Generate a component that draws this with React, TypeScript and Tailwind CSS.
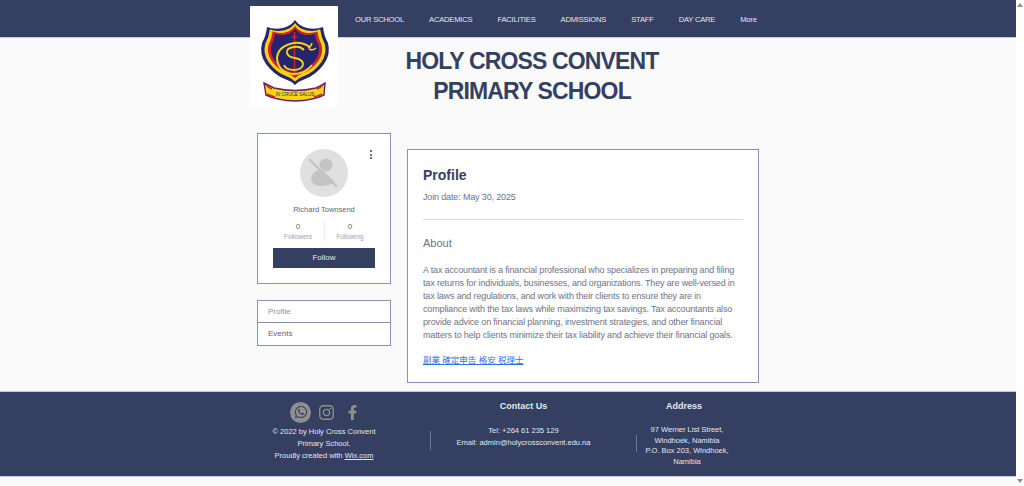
import { FaWhatsapp, FaInstagram, FaFacebookF } from "react-icons/fa";

const NAV = ["OUR SCHOOL", "ACADEMICS", "FACILITIES", "ADMISSIONS", "STAFF", "DAY CARE", "More"];
const SHIELD = "M45 14 Q49 20 57 22 Q66 24 73 21 Q74 30 78 37 Q81 48 74 58 Q66 69 55 73 Q49 75 45 79 Q41 75 35 73 Q24 69 16 58 Q9 48 12 37 Q16 30 17 21 Q24 24 33 22 Q41 20 45 14 Z";

function Crest() {
  return (
    <svg viewBox="0 0 88 101" className="absolute left-[250px] top-[6px] h-[101px] w-[88px] bg-white">
      <path d={SHIELD} fill="#26236f" />
      <path d={SHIELD} fill="#f5d614" transform="translate(45 44) scale(.9) translate(-45 -44)" />
      <path d={SHIELD} fill="#d0222b" transform="translate(45 44) scale(.8) translate(-45 -44)" />
      <path d={SHIELD} fill="#26236f" transform="translate(45 44) scale(.71) translate(-45 -44)" />
      <path d="M44.5 26 V71 M42 31 H47 M42 66 H47" stroke="#d0222b" strokeWidth="1.5" fill="none" />
      <path d="M60 41 Q52 36 44 37 Q28 40 27 52 Q28 67 44 68 Q55 68 62 59" stroke="#f5d614" strokeWidth="2" fill="none" />
      <path d="M54 44 Q50 40 44 41 Q36 42 37 47 Q38 51 45 52 Q54 54 53 59 Q51 64 44 64 Q36 64 34 59" stroke="#f5d614" strokeWidth="2" fill="none" />
      <path d="M58 42 Q61 41 62 37 M59 43 Q63 45 66 42" stroke="#f5d614" strokeWidth="1.4" fill="none" />
      <path d="M14 77 Q20 80 24 82 Q45 87 66 82 Q70 80 75 77 L74 89 Q68 92 62 93 Q45 97 28 93 Q22 92 16 89 Z" fill="#f5d614" stroke="#6d1f63" strokeWidth="1.4" />
      <path d="M16 79 Q19 82 22 83 M73 79 Q70 82 67 83 M17 88 Q21 90 25 91 M72 88 Q68 90 64 91" stroke="#d0222b" strokeWidth="1.6" fill="none" />
      <text x="45" y="89.5" textAnchor="middle" fontSize="4.6" fill="#2f2a50" fontFamily="Liberation Sans, sans-serif">IN CRUCE SALUS</text>
    </svg>
  );
}

function Avatar() {
  return (
    <div className="flex h-[48px] w-[48px] items-center justify-center rounded-full bg-[#e0e0e0]">
      <svg viewBox="0 0 48 48" className="h-[48px] w-[48px]">
        <circle cx="26" cy="16" r="6.5" fill="#c4c4c4" />
        <path d="M11 30 Q12 21 22 21 L35 33 Q29 37 21 37 Q12 37 11 30 Z" fill="#c4c4c4" />
        <path d="M9 10 L37 38" stroke="#c4c4c4" strokeWidth="2.4" />
      </svg>
    </div>
  );
}

export default function App() {
  return (
    <div className="flex h-[486px] w-[1024px] overflow-hidden bg-white font-['Liberation_Sans',sans-serif]">
      <div className="relative flex w-[1016px] flex-col bg-[#fafafa]">
        <header className="flex h-[38px] shrink-0 items-center gap-[25px] border-b border-[#c9c9e0] bg-[#343f62] pl-[355px] pt-[2px] text-[7.6px] tracking-[-0.2px] text-[#e4e6ee]">
          {NAV.map((n) => (
            <span key={n}>{n}</span>
          ))}
        </header>
        <Crest />
        <div className="flex h-[353px] shrink-0 flex-col">
          <h1 className="ml-[282px] mt-[8px] w-[500px] text-center text-[23px] font-bold leading-[30px] tracking-[-0.85px] text-[#343f62]">
            HOLY CROSS CONVENT
            <br />
            PRIMARY SCHOOL
          </h1>
          <div className="ml-[257px] mt-[27px] flex items-start gap-[16px]">
            <div className="flex w-[134px] flex-col gap-[16px]">
              <section className="relative flex h-[151px] flex-col items-center border border-[#8a90ad] bg-white pt-[15px]">
                <div className="absolute right-[18px] top-[16px] flex flex-col gap-[1.5px]">
                  <i className="block h-[2px] w-[2px] rounded-full bg-[#343f62]" />
                  <i className="block h-[2px] w-[2px] rounded-full bg-[#343f62]" />
                  <i className="block h-[2px] w-[2px] rounded-full bg-[#343f62]" />
                </div>
                <Avatar />
                <div className="mt-[8px] text-[7.5px] leading-[10px] text-[#5f6478]">Richard Townsend</div>
                <div className="mt-[7px] flex h-[19px] w-[103px] items-stretch">
                  <div className="flex flex-1 flex-col items-center text-center">
                    <span className="text-[8px] leading-[10px] text-[#5f6478]">0</span>
                    <span className="text-[6.5px] leading-[9px] text-[#9a9fb1]">Followers</span>
                  </div>
                  <div className="w-px bg-[#ededed]" />
                  <div className="flex flex-1 flex-col items-center text-center">
                    <span className="text-[8px] leading-[10px] text-[#5f6478]">0</span>
                    <span className="text-[6.5px] leading-[9px] text-[#9a9fb1]">Following</span>
                  </div>
                </div>
                <button className="mt-[7px] flex h-[20px] w-[102px] items-center justify-center bg-[#343f62] text-[8px] text-[#e4e6ee]">
                  Follow
                </button>
              </section>
              <nav className="flex h-[46px] flex-col border border-[#8a90ad] bg-white text-[8px] text-[#5f6478]">
                <div className="flex h-[22px] items-center border-b border-[#8a90ad] pl-[10px] text-[#8d92a6]">Profile</div>
                <div className="flex flex-1 items-center pl-[10px]">Events</div>
              </nav>
            </div>
            <section className="mt-[16px] flex h-[234px] w-[352px] flex-col border border-[#8a90ad] bg-white px-[15px] pt-[16px]">
              <h2 className="text-[14px] font-bold leading-[19px] text-[#343f62]">Profile</h2>
              <p className="mt-[6px] text-[9px] leading-[12px] tracking-[-0.15px] text-[#6d7389]">Join date: May 30, 2025</p>
              <div className="mt-[16px] h-px w-full bg-[#dcdcdc]" />
              <h3 className="mt-[16px] text-[11px] leading-[14px] text-[#6d7389]">About</h3>
              <p className="mt-[14px] w-[322px] text-[9px] leading-[13.1px] tracking-[-0.15px] text-[#6d7389]">
                A tax accountant is a financial professional who specializes in preparing and filing tax returns for individuals, businesses, and organizations. They are well-versed in tax laws and regulations, and work with their clients to ensure they are in compliance with the tax laws while maximizing tax savings. Tax accountants also provide advice on financial planning, investment strategies, and other financial matters to help clients minimize their tax liability and achieve their financial goals.
              </p>
              <a className="mt-[11px] font-['Liberation_Sans','Noto_Sans_CJK_JP',sans-serif] text-[8.5px] leading-[13px] text-[#2f6fdd] underline">副業 確定申告 格安 税理士</a>
            </section>
          </div>
        </div>
        <footer className="flex h-[86px] shrink-0 border-y border-[#c9c9e0] bg-[#343f62] text-[7.5px] text-[#e4e6ee]">
          <div className="ml-[265px] flex w-[120px] flex-col items-center pt-[9px] text-center">
            <div className="flex h-[22px] items-center gap-[5px] text-[#8f8f8f]">
              <span className="flex h-[21px] w-[21px] items-center justify-center rounded-full bg-[#8f8f8f] text-[14px] text-[#343f62]"><FaWhatsapp /></span>
              <FaInstagram className="ml-[2px] h-[17px] w-[17px]" />
              <FaFacebookF className="ml-[5px] h-[15px] w-[15px]" />
            </div>
            <div className="mr-[2px] mt-[3px] leading-[12px]">© 2022 by Holy Cross Convent<br />Primary School.<br />Proudly created with <u>Wix.com</u></div>
          </div>
          <div className="ml-[45px] mt-[39px] h-[19px] w-px bg-[#6f7893]" />
          <div className="flex w-[185px] flex-col items-center pt-[9px] text-center">
            <div className="text-[9px] font-bold leading-[11px]">Contact Us</div>
            <div className="mt-[13px] leading-[12px]">Tel: +264 61 235 129<br />Email: admin@holycrossconvent.edu.na</div>
          </div>
          <div className="ml-[20px] mt-[43px] h-[17px] w-px bg-[#6f7893]" />
          <div className="flex w-[100px] flex-col items-center pt-[9px] text-center">
            <div className="mr-[6px] text-[9px] font-bold leading-[11px]">Address</div>
            <div className="mt-[13px] leading-[10.7px]">97 Werner List Street,<br />Windhoek, Namibia<br />P.O. Box 203, Windhoek,<br />Namibia</div>
          </div>
        </footer>
      </div>
      <div className="flex w-[8px] flex-col justify-between bg-white py-[3px]">
        <div className="mx-auto h-0 w-0 border-x-[3px] border-b-[4px] border-x-transparent border-b-[#8f8f8f]" />
        <div className="mx-auto h-0 w-0 border-x-[3px] border-t-[4px] border-x-transparent border-t-[#8f8f8f]" />
      </div>
    </div>
  );
}
